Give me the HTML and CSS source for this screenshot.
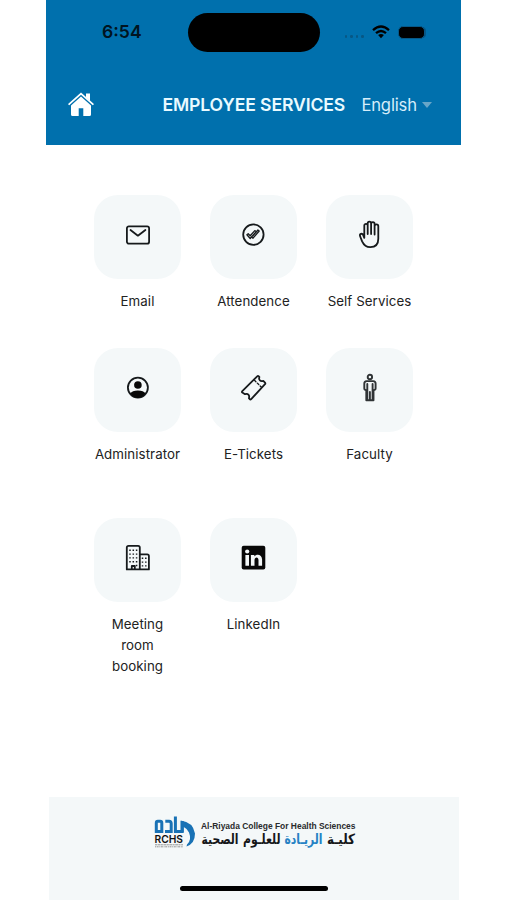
FILE: index.html
```html
<!DOCTYPE html>
<html lang="en">
<head>
<meta charset="utf-8">
<title>Employee Services</title>
<link rel="stylesheet" href="styles.css">
</head>
<body>
<div class="phone">
  <header class="header">
    <div class="status">
      <span class="time">6:54</span>
      <span class="island"></span>
      <span class="dots"><i></i><i></i><i></i><i></i></span>
      <svg class="wifi" viewBox="0 0 18 14"><g fill="none" stroke="#000" stroke-width="2.3"><path d="M1 5.1Q9-2 17 5.1M4 8.2Q9 3.8 14 8.2"/></g><path d="M6.1 10.1Q9 8 11.9 10.1L9 13.2Z"/></svg>
      <span class="battery"></span>
    </div>
    <div class="nav">
      <svg class="home" viewBox="0 0 26 25" fill="#fff"><path d="M13 4.6 3 13.5V22.5Q3 24 4.5 24H10.7V16.3H15.3V24H21.5Q23 24 23 22.5V13.5Z"/><path d="M1.2 12.2 13 1.7 24.8 12.2" fill="none" stroke="#fff" stroke-width="1.8" stroke-linecap="round"/><path d="M18 1.5H22V9L18 5.5Z"/></svg>
      <h1 class="title">EMPLOYEE SERVICES</h1>
      <span class="language">English</span>
      <span class="caret"></span>
    </div>
  </header>
  <main class="services">
    <a class="service"><span class="tile"><svg viewBox="0 0 30 30"><rect x="3.9" y="6.3" width="22.2" height="17.4" rx="2"/><path d="m7.5 10 7.4 5.7L22.4 10"/></svg></span><span class="label">Email</span></a>
    <a class="service"><span class="tile"><svg viewBox="0 0 30 30"><circle cx="14.4" cy="14.6" r="10.2"/><path class="fine" d="m7.9 14.8 1.3-1 2 2 4.6-5.2 1.4 1.1-6 6.8ZM12.5 16.6l1.5 1.6 6.2-7.2-1.3-1-5 5.8"/></svg></span><span class="label">Attendence</span></a>
    <a class="service"><span class="tile"><svg viewBox="0 0 30 30"><path d="M9.3 17.8V5.6a1.7 1.7 0 0 1 3.4 0v8.5V3.4a1.7 1.7 0 0 1 3.4 0v10.7V3.9a1.7 1.7 0 0 1 3.5 0v10.6V6.2a1.8 1.8 0 0 1 3.7 0v12.6c0 5.5-3.2 8.4-8 8.4-4.4 0-6.6-2.3-8.2-5.8l-2-5.2c-.8-2.2 1.9-3.4 3-1.4Z"/></svg></span><span class="label">Self Services</span></a>
    <a class="service"><span class="tile"><svg viewBox="0 0 30 30"><circle cx="14.9" cy="14.6" r="10"/><circle class="solid" cx="14.9" cy="12" r="3.8"/><path class="solid" d="M7.3 20.6q1.8-3 7.6-3t7.6 3q-3 4.3-7.6 4.3t-7.6-4.3Z"/></svg></span><span class="label">Administrator</span></a>
    <a class="service"><span class="tile"><svg viewBox="0 0 30 30"><path d="m3.3 18.2 14.9-14.9q.8-.8 1.6 0l.6.7q-.8 2.2.5 3.4 1.2 1.2 3.4.4l1.7 1.8q.7.8 0 1.6L12.2 26.1q-.8.8-1.5 0l-.8-.9q.8-2.2-.5-3.6-1.2-1.2-3.4-.4l-2.7-1.6q-.8-.6 0-1.4Z"/><path class="fine" stroke-dasharray="2 2" d="m15.5 7.3 7 7"/></svg></span><span class="label">E-Tickets</span></a>
    <a class="service"><span class="tile"><svg viewBox="0 0 30 30"><g class="person"><circle cx="14.9" cy="4" r="2.2"/><path d="M11.6 8.1h6.6q2.4.2 2.4 2.5v5q0 1.5-2.1 1.7V27.3h-7.2V17.3q-2-.2-2-1.7v-5q0-2.3 2.3-2.5ZM12.3 11v15.5M17.6 11v15.5M14.9 19v8"/></g></svg></span><span class="label">Faculty</span></a>
    <a class="service late"><span class="tile"><svg viewBox="0 0 30 30"><path d="M5.5 2.9h9.6q1.7 0 1.7 1.7v21.8h-13V4.6q0-1.7 1.7-1.7ZM16.8 11.3h7.4q1.7 0 1.7 1.7v13.4h-9.1M8.8 26v-3h3v3"/><path class="windows" d="M7 6.6v15M10.3 6.6v14M13.6 6.6v19M19.5 14.6v10M22.8 14.6v10"/></svg></span><span class="label">Meeting<br>room<br>booking</span></a>
    <a class="service late"><span class="tile"><svg viewBox="0 0 30 30"><rect class="solid" x="2.7" y="2.8" width="23.6" height="23.6" rx="2"/><g fill="#f4f8f9" stroke="none"><circle cx="8.2" cy="8.5" r="2.1"/><path d="M6.4 11.9h3.6v10.9H6.4ZM11.9 11.9h3.4v1.5c2.2-3 7.8-2.2 7.8 3v6.4H19.5v-5.6c0-3.7-4-3.2-4 0v5.6h-3.6Z"/></g></svg></span><span class="label">LinkedIn</span></a>
  </main>
  <footer class="footer">
    <svg class="logo" viewBox="0 0 204 36">
      <g fill="none" stroke="#1972b5" stroke-width="3">
        <path d="M3.8 6.2H6.2Q7.8 6.2 7.8 8V16.5H2.3V8Q2.3 6.2 3.8 6.2ZM11.3 6.2H15Q17.2 6.2 17.2 8.5V16.5H11M21.4 1.5V16.5H28.2V6"/>
      </g>
      <path fill="#1972b5" d="M26.7 5.5Q39 7 41 18.5 41 28.5 32.5 31.5L33 29.5Q38 25 35 17.5 33.3 13.6 29.7 12V17H26.7Z"/>
      <text class="mark" x="0.5" y="27.6" textLength="28.5" lengthAdjust="spacingAndGlyphs">RCHS</text>
      <g stroke="#888" fill="none" stroke-width=".9"><path stroke-dasharray="2 .5 3 .4" d="M1 29.8H29"/><path stroke-dasharray="1 .6 2 .7" d="M1 31.8H29"/></g>
      <text class="english" x="47" y="13.6" textLength="154.5" lengthAdjust="spacingAndGlyphs">Al-Riyada College For Health Sciences</text>
      <g class="arabic" direction="rtl">
        <text x="201" y="28.5" textLength="28" lengthAdjust="spacingAndGlyphs">كليـة</text>
        <text class="blue" x="168.5" y="28.5" textLength="38" lengthAdjust="spacingAndGlyphs">الريـادة</text>
        <text x="126.5" y="28.5" textLength="37.5" lengthAdjust="spacingAndGlyphs">للعلـوم</text>
        <text x="84.5" y="28.5" textLength="37" lengthAdjust="spacingAndGlyphs">الصحية</text>
      </g>
    </svg>
    <span class="home-bar"></span>
  </footer>
</div>
</body>
</html>
```
FILE: styles.css
```css
* { box-sizing: border-box; }
body { margin: 0; background: #fff; font-family: Inter, "Liberation Sans", sans-serif; }
.phone { width: 415px; height: 900px; margin-left: 46.4px; display: flex; flex-direction: column; }
.header { height: 145.4px; background: #0070ad; }
.status { height: 64px; display: flex; align-items: center; padding-left: 55.6px; }
.time { width: 86px; font-size: 17.6px; font-weight: 600; line-height: 20px; color: #001421; }
.island { width: 132px; height: 39px; border-radius: 20px; background: #000; }
.dots { display: flex; gap: 3px; margin: 9px 0 0 24.6px; }
.dots i { width: 2.5px; height: 2.5px; border-radius: 50%; background: #075785; }
.wifi { width: 18px; height: 14px; margin-left: 8.9px; }
.battery { width: 27px; height: 13px; margin-left: 8px; border: 1.5px solid #075887; border-radius: 5px; background: #000; box-shadow: 2px 0 0 -1px #075887; }
.nav { height: 81px; display: flex; align-items: center; padding-left: 21.8px; }
.home { width: 26px; height: 25px; }
.title { width: 199px; margin: 0 0 0 68.2px; font-size: 17.6px; line-height: 22px; font-weight: 600; letter-spacing: -.12px; color: #e9faff; white-space: nowrap; }
.language { width: 61px; font-size: 16.6px; line-height: 22px; letter-spacing: -.15px; color: #d5edfa; }
.caret { border: 5px solid transparent; border-top: 6px solid #68a6c8; border-bottom: 0; }
.services { height: 651.6px; padding: 49.4px 0 0 47.6px; display: grid; grid-template-columns: repeat(3, 87px); grid-template-rows: 153px 153px 180px; column-gap: 29px; align-content: start; }
.service { display: flex; flex-direction: column; align-items: center; color: #222; }
.late { padding-top: 17px; }
.tile { width: 87px; height: 84px; flex: none; display: flex; align-items: flex-start; justify-content: center; padding: 25px 0 0 1.2px; border-radius: 24px; background: #f4f8f9; }
.tile svg { width: 30px; height: 30px; fill: none; stroke: #161a1c; stroke-width: 1.8; stroke-linejoin: round; stroke-linecap: round; }
.tile .fine { stroke-width: 1.3; }
.tile .solid { fill: #080808; stroke: none; }
.tile .person { stroke: #303436; stroke-width: 1.9; }
.tile .windows { stroke-width: 1.5; stroke-dasharray: 1.4 2.4; stroke-linecap: butt; }
.label { margin-top: 12px; font-size: 13.3px; line-height: 21px; text-align: center; white-space: nowrap; letter-spacing: .07px; }
.footer { width: 410px; height: 103px; margin-left: 3px; background: #f4f8f9; display: flex; flex-direction: column; align-items: center; }
.logo { width: 204px; height: 36px; margin: 18px 0 0 3px; overflow: visible; }
.mark { font: 600 10.5px Inter, sans-serif; fill: #111; }
.english { font: 700 8.5px "Liberation Sans", sans-serif; fill: #292b2d; }
.arabic { font: 700 14px "DejaVu Sans", sans-serif; fill: #151719; }
.blue { fill: #2682c4; }
.home-bar { width: 148px; height: 5px; margin-top: 35px; border-radius: 3px; background: #000; }
```
